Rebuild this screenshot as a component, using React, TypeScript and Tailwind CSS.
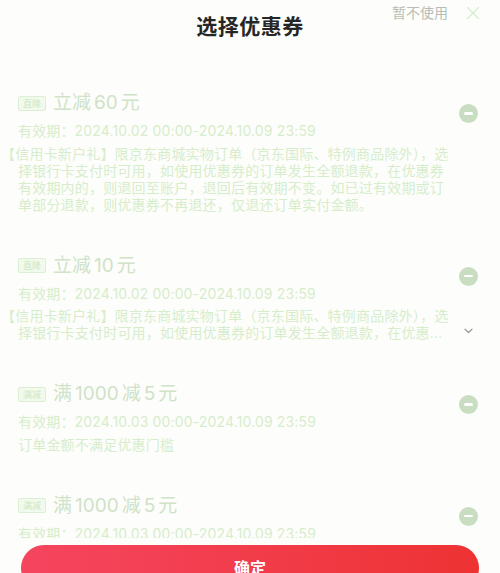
import React from "react";

const FONT = { fontFamily: '"Inter", "Noto Sans CJK SC", sans-serif' };

function Minus() {
  return (
    <div className="w-[19px] h-[19px] rounded-full bg-[#c9ddc3] flex items-center justify-center">
      <div className="w-[9px] h-[2.5px] rounded-full bg-white" />
    </div>
  );
}

function Tag({ text }: { text: string }) {
  return (
    <div className="h-[15px] w-[28px] border border-[#dcefd4] bg-[#f1faec] rounded-[2px] flex items-center justify-center text-[9px] leading-none text-[#cfe6c4]">
      {text}
    </div>
  );
}

type Coupon = {
  tag: string;
  title: React.ReactNode;
  date: string;
  lines: string[];
  chevron?: boolean;
};

function Card({ c }: { c: Coupon }) {
  return (
    <div className="flex pl-[18px]">
      <div className="w-[441px] flex flex-col">
        <div className="h-[26px] flex items-center gap-[7px]">
          <Tag text={c.tag} />
          <div className="text-[19px] leading-[26px] text-[#d0e2c8] flex items-center">{c.title}</div>
        </div>
        <div className="mt-[5px] h-[20px] leading-[20px] text-[14px] text-[#d6edcc] tracking-[0.15px] whitespace-nowrap">
          {c.date}
        </div>
        <div className="mt-[3.5px] flex flex-col text-[14px] leading-[17px] text-[#d6edcc] tracking-[0.2px] whitespace-nowrap">
          {c.lines.map((l, i) => (
            <div key={i} className={l.startsWith("【") ? "-ml-[17px]" : ""}>{l}</div>
          ))}
        </div>
      </div>
      <div className="w-[19px] flex flex-col items-center">
        <div className="mt-[14px]">
          <Minus />
        </div>
        {c.chevron && (
          <div className="mt-auto mb-[2px] h-[17px] flex items-center">
            <svg width="9" height="6" viewBox="0 0 9 6" fill="none">
              <path d="M1 1.2 L4.5 4.5 L8 1.2" stroke="#9a9a9a" strokeWidth="1.2" strokeLinecap="round" strokeLinejoin="round" />
            </svg>
          </div>
        )}
      </div>
    </div>
  );
}

function T({ a, n, b, m, c }: { a: string; n: string; b?: string; m?: string; c: string }) {
  return (
    <>
      <span>{a}</span>
      <span className="ml-[3px]">{n}</span>
      {b && <span className="ml-[3px]">{b}</span>}
      {m && <span className="ml-[3px]">{m}</span>}
      <span className="ml-[3px]">{c}</span>
    </>
  );
}

const coupons: Coupon[] = [
  {
    tag: "直降",
    title: <T a="立减" n="60" c="元" />,
    date: "有效期：2024.10.02 00:00-2024.10.09 23:59",
    lines: [
      "【信用卡新户礼】限京东商城实物订单（京东国际、特例商品除外），选",
      "择银行卡支付时可用，如使用优惠券的订单发生全额退款，在优惠券",
      "有效期内的，则退回至账户，退回后有效期不变。如已过有效期或订",
      "单部分退款，则优惠券不再退还，仅退还订单实付金额。",
    ],
  },
  {
    tag: "直降",
    title: <T a="立减" n="10" c="元" />,
    date: "有效期：2024.10.02 00:00-2024.10.09 23:59",
    lines: [
      "【信用卡新户礼】限京东商城实物订单（京东国际、特例商品除外），选",
      "择银行卡支付时可用，如使用优惠券的订单发生全额退款，在优惠...",
    ],
    chevron: true,
  },
  {
    tag: "满减",
    title: <T a="满" n="1000" b="减" m="5" c="元" />,
    date: "有效期：2024.10.03 00:00-2024.10.09 23:59",
    lines: ["订单金额不满足优惠门槛"],
  },
  {
    tag: "满减",
    title: <T a="满" n="1000" b="减" m="5" c="元" />,
    date: "有效期：2024.10.03 00:00-2024.10.09 23:59",
    lines: ["订单金额不满足优惠门槛"],
  },
];

export default function App() {
  return (
    <div className="w-[500px] h-[573px] overflow-hidden bg-[#fdfefb] flex flex-col" style={FONT}>
      <div className="relative h-[54px] shrink-0 flex items-center justify-center">
        <div className="text-[21px] font-bold text-[#262626] tracking-[0.5px]">选择优惠券</div>
        <div className="absolute right-[52px] top-[3px] text-[14px] leading-[20px] text-[#b6bdb6]">暂不使用</div>
        <div className="absolute right-[20px] top-[6px]">
          <svg width="14" height="14" viewBox="0 0 14 14" fill="none">
            <path d="M1.5 1.5 L12.5 12.5 M12.5 1.5 L1.5 12.5" stroke="#d6ebcc" strokeWidth="1.3" strokeLinecap="round" />
          </svg>
        </div>
      </div>
      <div className="flex-1 overflow-hidden pt-[36px] flex flex-col gap-[40px]">
        {coupons.map((c, i) => (
          <Card key={i} c={c} />
        ))}
      </div>
      <div className="h-[35px] shrink-0 px-[21px] pt-[7px]">
        <div className="h-[46px] rounded-full bg-gradient-to-r from-[#f5455f] to-[#ee3232] flex items-center justify-center text-white text-[16px] font-bold">
          确定
        </div>
      </div>
    </div>
  );
}
